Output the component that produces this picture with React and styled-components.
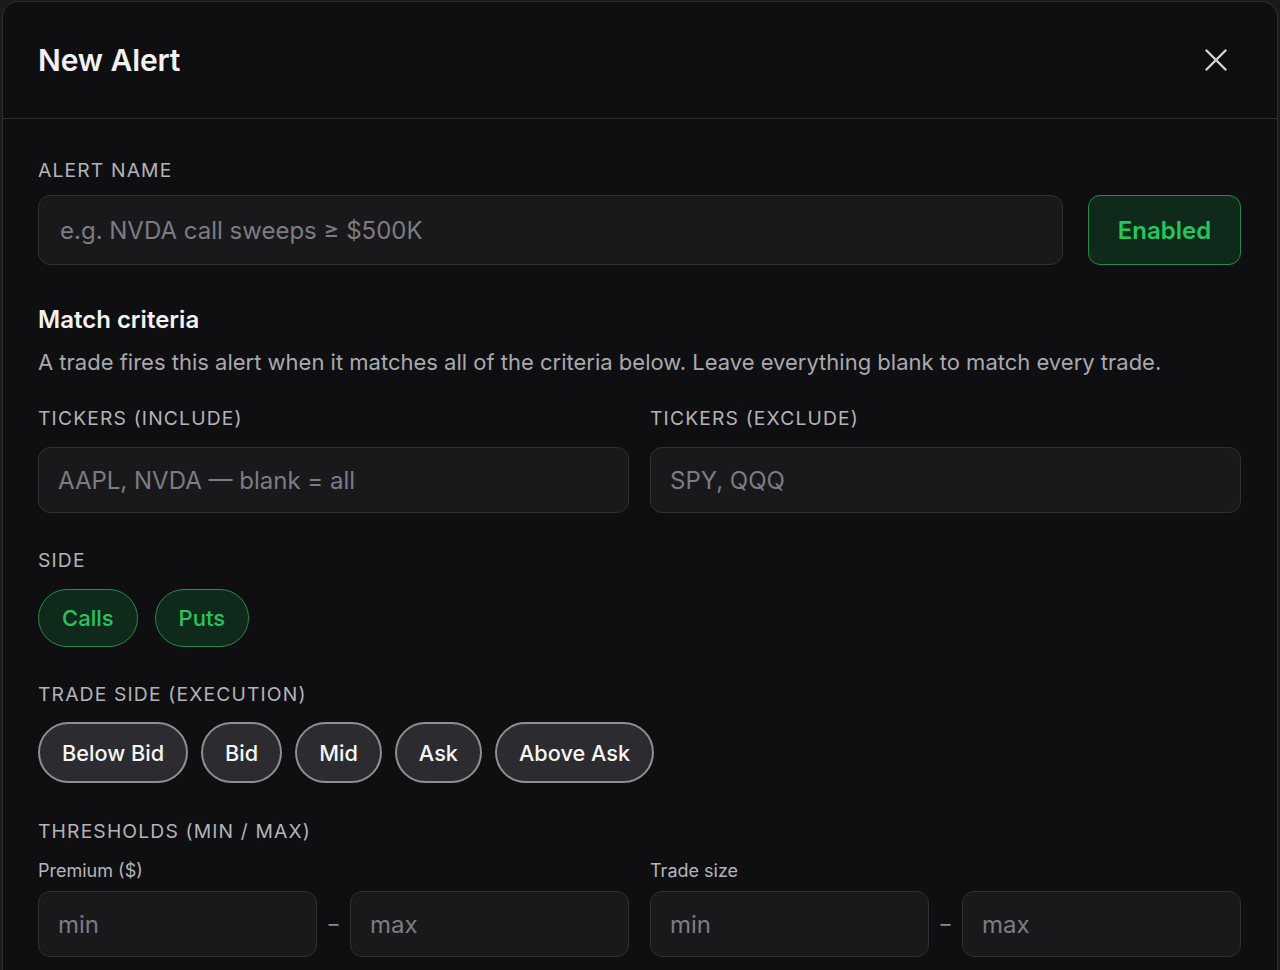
import React from "react";
import styled, { createGlobalStyle } from "styled-components";

const Global = createGlobalStyle`
  html, body { margin: 0; padding: 0; background: #1a1a1c; }
  body { font-family: Inter, "Noto Sans", sans-serif; -webkit-font-smoothing: antialiased; }
  * { box-sizing: border-box; }
`;

const Modal = styled.div`
  margin: 1px 2px 0 2px;
  height: 969px;
  background: #0f0f11;
  border: 1px solid #2c2c30;
  border-bottom: none;
  border-radius: 16px 16px 0 0;
  overflow: hidden;
  display: flex;
  flex-direction: column;
`;

const Header = styled.div`
  height: 117px;
  flex: none;
  display: flex;
  align-items: center;
  justify-content: space-between;
  padding: 0 36px 0 35px;
  border-bottom: 1px solid #2e2e32;
`;

const Title = styled.h2`
  margin: 0;
  font-size: 30px;
  font-weight: 600;
  color: #f2f2f3;
  letter-spacing: -0.1px;
`;

const CloseBtn = styled.button`
  width: 50px;
  height: 50px;
  background: none;
  border: none;
  display: flex;
  align-items: center;
  justify-content: center;
  color: #d4d4d6;
  padding: 0;
`;

const Body = styled.div`
  padding: 39px 36px 0 35px;
  display: flex;
  flex-direction: column;
`;

const Label = styled.div`
  font-size: 19.3px;
  line-height: 24px;
  letter-spacing: 1.15px;
  text-transform: uppercase;
  color: #b4b4b8;
  margin-top: ${(p) => p.$mt || 0}px;
  margin-bottom: ${(p) => p.$mb || 0}px;
`;

const NameRow = styled.div`
  display: flex;
  gap: 25px;
`;

const Input = styled.input`
  flex: 1 1 auto;
  width: 100%;
  min-width: 0;
  height: ${(p) => p.$h || 66}px;
  background: #19191c;
  border: 1.5px solid #303034;
  border-radius: 12px;
  padding: 0 ${(p) => p.$pl || 19}px;
  font-family: Inter, sans-serif;
  font-size: 24px;
  color: #f0f0f0;
  outline: none;
  &::placeholder { color: #7c7c82; }
`;

const EnabledBtn = styled.button`
  flex: none;
  width: 153px;
  height: 70px;
  background: #0f2a1a;
  border: 1.5px solid #1f8d47;
  border-radius: 12px;
  color: #26c55f;
  font-family: Inter, sans-serif;
  font-size: 24px;
  font-weight: 600;
`;

const SectionTitle = styled.div`
  margin-top: 40px;
  font-size: 24px;
  line-height: 30px;
  font-weight: 600;
  color: #f4f4f5;
`;

const Desc = styled.p`
  margin: 13px 0 0;
  font-size: 22px;
  line-height: 28px;
  color: #a9a9ae;
`;

const TwoCol = styled.div`
  display: grid;
  grid-template-columns: 1fr 1fr;
  column-gap: 21px;
  margin-top: ${(p) => p.$mt || 0}px;
`;

const Col = styled.div`
  display: flex;
  flex-direction: column;
  min-width: 0;
`;

const ChipRow = styled.div`
  display: flex;
  gap: ${(p) => p.$gap}px;
`;

const SideChip = styled.button`
  height: 58px;
  padding: 0 23px;
  border-radius: 29px;
  background: #0f2a1a;
  border: 1.5px solid #1f8d47;
  color: #26c55f;
  font-family: Inter, sans-serif;
  font-size: 22px;
  font-weight: 500;
`;

const ExecChip = styled.button`
  height: 61px;
  padding: 0 22px;
  border-radius: 31px;
  background: #2c2c30;
  border: 2px solid #8e8e93;
  color: #f6f6f7;
  font-family: Inter, sans-serif;
  font-size: 21.7px;
  font-weight: 500;
`;

const SubLabel = styled.div`
  font-size: 18px;
  line-height: 22px;
  color: #b4b4b8;
  margin-bottom: 9px;
`;

const RangeRow = styled.div`
  display: flex;
  align-items: center;
  gap: 10px;
`;

const Dash = styled.span`
  flex: none;
  color: #8a8a8f;
  font-size: 20px;
  width: 13px;
  text-align: center;
`;

const Range = ({ label }) => (
  <Col>
    <SubLabel>{label}</SubLabel>
    <RangeRow>
      <Input placeholder="min" />
      <Dash>–</Dash>
      <Input placeholder="max" />
    </RangeRow>
  </Col>
);

export default function App() {
  return (
    <>
      <Global />
      <Modal>
        <Header>
          <Title>New Alert</Title>
          <CloseBtn aria-label="Close">
            <svg width="22" height="22" viewBox="0 0 22 22" fill="none" stroke="currentColor" strokeWidth="2.4" strokeLinecap="round">
              <path d="M1.5 1.5 20.5 20.5M20.5 1.5 1.5 20.5" />
            </svg>
          </CloseBtn>
        </Header>
        <Body>
          <Label $mb={13}>Alert name</Label>
          <NameRow>
            <Input $h={70} $pl={21} placeholder="e.g. NVDA call sweeps ≥ $500K" />
            <EnabledBtn>Enabled</EnabledBtn>
          </NameRow>

          <SectionTitle>Match criteria</SectionTitle>
          <Desc>A trade fires this alert when it matches all of the criteria below. Leave everything blank to match every trade.</Desc>

          <TwoCol $mt={30}>
            <Col>
              <Label $mb={17}>Tickers (include)</Label>
              <Input placeholder="AAPL, NVDA — blank = all" />
            </Col>
            <Col>
              <Label $mb={17}>Tickers (exclude)</Label>
              <Input placeholder="SPY, QQQ" />
            </Col>
          </TwoCol>

          <Label $mt={35} $mb={17}>Side</Label>
          <ChipRow $gap={17}>
            <SideChip>Calls</SideChip>
            <SideChip>Puts</SideChip>
          </ChipRow>

          <Label $mt={35} $mb={16}>Trade side (execution)</Label>
          <ChipRow $gap={13}>
            <ExecChip>Below Bid</ExecChip>
            <ExecChip>Bid</ExecChip>
            <ExecChip>Mid</ExecChip>
            <ExecChip>Ask</ExecChip>
            <ExecChip>Above Ask</ExecChip>
          </ChipRow>

          <Label $mt={36} $mb={17}>Thresholds (min / max)</Label>
          <TwoCol>
            <Range label="Premium ($)" />
            <Range label="Trade size" />
          </TwoCol>
        </Body>
      </Modal>
    </>
  );
}
